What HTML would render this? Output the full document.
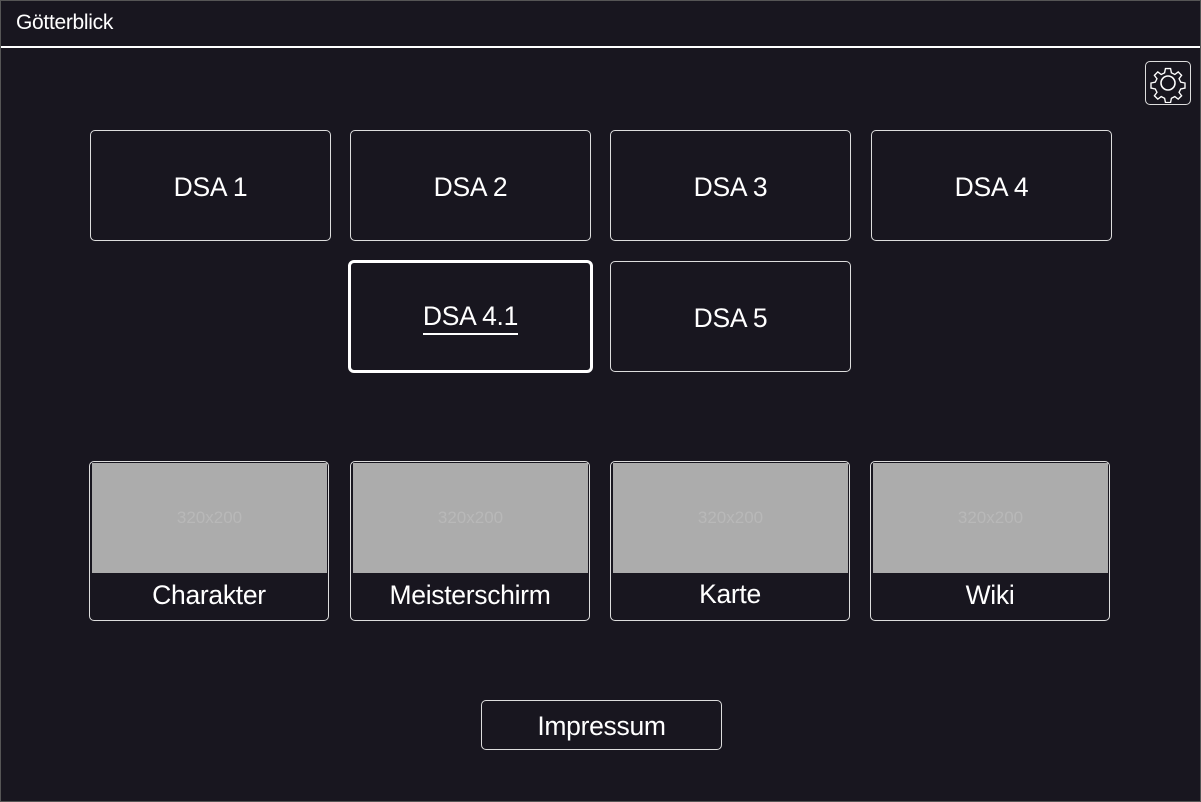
<!DOCTYPE html>
<html><head><meta charset="utf-8"><style>
body{margin:0;width:1201px;height:802px;background:#18161f;font-family:"Liberation Sans",sans-serif;color:#fff;position:relative;overflow:hidden}
.frame{position:absolute;left:0;top:0;width:1199px;height:800px;border:1px solid #555}
.hdr{position:absolute;left:16px;top:11px;font-size:21px;letter-spacing:-0.3px}
.line{position:absolute;left:1px;top:46px;width:1199px;height:2px;background:#fff}
.b{position:absolute;box-sizing:border-box;border:1px solid #ddd;border-radius:5px;display:flex;align-items:center;justify-content:center;font-size:26.5px;letter-spacing:-0.3px;padding-top:3px}
.c{position:absolute;box-sizing:border-box;border:1px solid #ddd;border-radius:5px;width:240px;height:160px;top:461px}
.c .img{position:absolute;left:2px;top:1px;right:1px;height:110px;background:#acacac;color:#b8b8b8;font-size:17px;display:flex;align-items:center;justify-content:center}
.c .t{position:absolute;left:0;right:0;top:118px;text-align:center;font-size:26.5px;letter-spacing:-0.3px}
</style></head><body>
<div class="frame"></div>
<div class="hdr">Götterblick</div>
<div class="line"></div>
<div class="b" style="left:1145px;top:61px;width:46px;height:44px;border-radius:5px;padding:0">
<svg width="40" height="40" viewBox="0 0 40 40" fill="none" stroke="#fff" stroke-width="1.6"><path d="M17 3h6l1 5 4 2 4-3 4 4-3 4 2 4 5 1v6l-5 1-2 4 3 4-4 4-4-3-4 2-1 5h-6l-1-5-4-2-4 3-4-4 3-4-2-4-5-1v-6l5-1 2-4-3-4 4-4 4 3 4-2z" transform="translate(20 20) scale(.85) translate(-20 -20)"/><circle cx="20" cy="20" r="7"/></svg></div>
<div class="b" style="left:90px;top:130px;width:241px;height:111px">DSA 1</div>
<div class="b" style="left:350px;top:130px;width:241px;height:111px">DSA 2</div>
<div class="b" style="left:610px;top:130px;width:241px;height:111px">DSA 3</div>
<div class="b" style="left:871px;top:130px;width:241px;height:111px">DSA 4</div>
<div class="b" style="left:348px;top:260px;width:245px;height:113px;border:3px solid #fff;border-radius:6px"><span style="border-bottom:2px solid #fff;padding-bottom:1px">DSA 4.1</span></div>
<div class="b" style="left:610px;top:261px;width:241px;height:111px">DSA 5</div>
<div class="c" style="left:89px"><div class="img">320x200</div><div class="t">Charakter</div></div>
<div class="c" style="left:350px"><div class="img">320x200</div><div class="t">Meisterschirm</div></div>
<div class="c" style="left:610px"><div class="img">320x200</div><div class="t" style="top:117px">Karte</div></div>
<div class="c" style="left:870px"><div class="img">320x200</div><div class="t">Wiki</div></div>
<div class="b" style="left:481px;top:700px;width:241px;height:50px">Impressum</div>
</body></html>
